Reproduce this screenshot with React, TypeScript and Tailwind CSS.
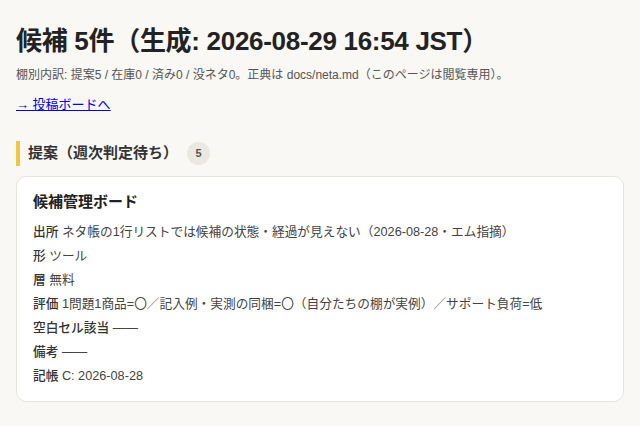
import React from 'react';

const rows: { label: string; value: string }[] = [
    { label: '出所', value: 'ネタ帳の1行リストでは候補の状態・経過が見えない（2026-08-28・エム指摘）' },
    { label: '形', value: 'ツール' },
    { label: '層', value: '無料' },
    { label: '評価', value: '1問題1商品=〇／記入例・実測の同梱=〇（自分たちの棚が実例）／サポート負荷=低' },
    { label: '空白セル該当', value: '——' },
    { label: '備考', value: '——' },
    { label: '記帳', value: 'C: 2026-08-28' },
];

export default function App() {
    return (
        <div
            className="min-h-[426px] bg-[#f9f8f5] px-4 pt-[24px] text-[#222]"
            style={{ fontFamily: '"Liberation Sans", "Noto Sans CJK JP", sans-serif' }}
        >
            <h1 className="text-[26px] font-bold leading-[34px] tracking-[-0.3px]">
                候補 5件（生成: 2026-08-29 16:54 JST）
            </h1>
            <p className="mt-[8px] text-[12px] leading-[18px] text-[#555]">
                棚別内訳: 提案5 / 在庫0 / 済み0 / 没ネタ0。正典は docs/neta.md（このページは閲覧専用）。
            </p>
            <a href="#" className="mt-[11px] block w-fit text-[13px] leading-[20px] text-[#0000ee] underline">
                → 投稿ボードへ
            </a>

            <section className="mt-[26px]">
                <div className="flex items-center gap-[9px] border-l-[4px] border-[#f2c443] pl-[8px] h-[25px]">
                    <h2 className="text-[15px] font-bold text-[#333]">提案（週次判定待ち）</h2>
                    <span className="flex h-[23px] w-[23px] items-center justify-center rounded-full bg-[#ebe8e1] text-[11px] font-bold text-[#555]">
                        5
                    </span>
                </div>

                <div className="mt-[10px] rounded-[10px] border border-[#e6e3dc] bg-white px-4 pt-[15px] pb-[15px]">
                    <h3 className="text-[15px] font-bold leading-[19px] text-[#222]">候補管理ボード</h3>
                    <div className="mt-[11px] flex flex-col gap-[4px]">
                        {rows.map((r) => (
                            <div key={r.label} className="text-[12.7px] leading-[20px] text-[#444]">
                                <span className="font-medium text-[#333]">{r.label}</span> {r.value}
                            </div>
                        ))}
                    </div>
                </div>
            </section>
        </div>
    );
}
